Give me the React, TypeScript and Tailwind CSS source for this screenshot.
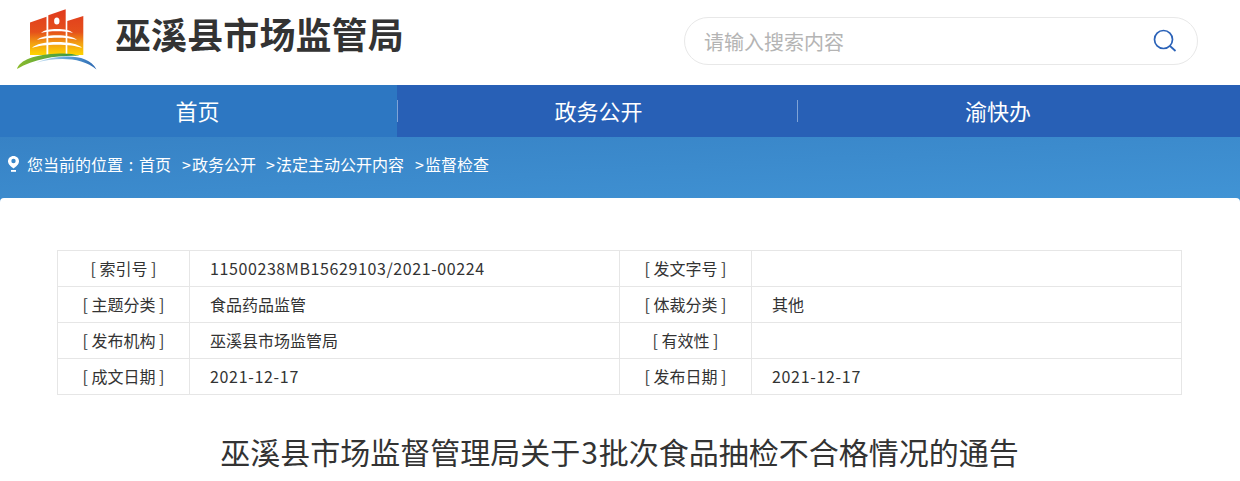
const font = { fontFamily: '"Noto Sans CJK SC", "Noto Sans", sans-serif' };

function Logo() {
  return (
    <svg width="110" height="80" viewBox="0 0 110 80" className="block shrink-0">
      <defs>
        <linearGradient id="flag" x1="0" y1="9" x2="0" y2="55" gradientUnits="userSpaceOnUse">
          <stop offset="0" stopColor="#e03a1e" />
          <stop offset="0.5" stopColor="#e5501b" />
          <stop offset="0.75" stopColor="#f3a012" />
          <stop offset="1" stopColor="#fed500" />
        </linearGradient>
        <linearGradient id="green" x1="17" y1="0" x2="70" y2="0" gradientUnits="userSpaceOnUse">
          <stop offset="0" stopColor="#8cbb2c" />
          <stop offset="1" stopColor="#3d9a46" />
        </linearGradient>
        <linearGradient id="blue" x1="36" y1="0" x2="97" y2="0" gradientUnits="userSpaceOnUse">
          <stop offset="0" stopColor="#d6e8f4" />
          <stop offset="0.5" stopColor="#5da3d8" />
          <stop offset="1" stopColor="#2a66b0" />
        </linearGradient>
      </defs>
      <path d="M30 22.500L46.500 16.700V55H30Z" fill="url(#flag)" />
      <path d="M48.300 15.300L65.700 9.300V55H48.300Z" fill="url(#flag)" />
      <path d="M67.300 21L83.300 16V55H67.300Z" fill="url(#flag)" />
      <ellipse cx="56.800" cy="21" rx="2.700" ry="3.500" fill="#fff" />
      <path d="M47.400 33V55M66.500 33V55" stroke="#fff" strokeWidth="1.100" strokeOpacity="0.85" />
      <path d="M41 33C45 27.500 69 27.500 73 33C66 30.500 48 30.500 41 33Z" fill="#fff" />
      <path d="M37 40C42 33.500 72 33.500 77 40C68 37 46 37 37 40Z" fill="#fff" />
      <path d="M32 48C38 40 76 40 82 48C72 43.500 42 43.500 32 48Z" fill="#fff" />
      <path d="M17 69C20 60 34 54.500 60 53.500C68 53.300 74 54 80 56C60 55 36 58 17 69Z" fill="url(#green)" />
      <path d="M36 63C55 57 82 56.500 96.500 69.500C92 60 80 56.500 68 56.500C56 56.500 44 59 36 63Z" fill="url(#blue)" />
    </svg>
  );
}

const rows = [
  ["[ 索引号 ]", "11500238MB15629103/2021-00224", "[ 发文字号 ]", ""],
  ["[ 主题分类 ]", "食品药品监管", "[ 体裁分类 ]", "其他"],
  ["[ 发布机构 ]", "巫溪县市场监管局", "[ 有效性 ]", ""],
  ["[ 成文日期 ]", "2021-12-17", "[ 发布日期 ]", "2021-12-17"],
];

function Value({ text }: { text: string }) {
  if (text.length > 20) return <span className="tracking-[0.6px]">{text}</span>;
  if (/^[0-9-]+$/.test(text)) return <span className="tracking-[0.68px]">{text}</span>;
  return <span>{text}</span>;
}

export default function App() {
  return (
    <div className="w-[1240px] h-[481px] overflow-hidden bg-white" style={font}>
      <header className="h-[85px] flex">
        <div className="w-[684px] flex items-start">
          <Logo />
          <h1 className="mt-[9px] ml-[5px] text-[36px] leading-[48px] font-bold text-[#333333] whitespace-nowrap tracking-[0.1px]">巫溪县市场监管局</h1>
        </div>
        <div className="mt-[17px] w-[514px] h-[48px] rounded-[24px] border border-[#e8e8e8] flex items-center pl-[19px] pr-5 justify-between">
          <span className="text-[20px] leading-[28px] mt-[2px] text-[#b4b4b4]">请输入搜索内容</span>
          <svg width="24" height="24" viewBox="0 0 24 24" fill="none" stroke="#2a62b8" strokeWidth="1.700">
            <circle cx="10.500" cy="10.500" r="9" />
            <path d="M17 17L22.500 22" />
          </svg>
        </div>
      </header>
      <nav className="h-[52px] flex bg-[#2860b6] text-white text-[22px] leading-[30px]">
        <div className="w-[397px] bg-[#2d77c2] flex items-center justify-center pb-[3px] pr-[2px]">首页</div>
        <div className="w-[401px] flex items-center justify-center relative pb-[3px] pl-[2px]">
          政务公开
          <span className="absolute right-0 top-[15px] h-[22px] w-px bg-[#7fa3d6]" />
          <span className="absolute left-0 top-[15px] h-[22px] w-px bg-[#7fa3d6]" />
        </div>
        <div className="w-[402px] flex items-center justify-center pb-[3px] pr-[2px]">渝快办</div>
      </nav>
      <div className="h-[65px] bg-gradient-to-br from-[#3782c5] to-[#4194d5] flex items-start pl-[7px] pt-[16px] text-white text-[16px] leading-[22px] whitespace-nowrap">
        <svg width="13" height="18" viewBox="0 0 13 18" className="mt-[2px] mr-[7px]">
          <path d="M6.500 1C3.300 1 1 3.300 1 6.300C1 9.300 4 11.800 6.500 13.500C9 11.800 12 9.300 12 6.300C12 3.300 9.700 1 6.500 1Z" fill="#fff" />
          <circle cx="6.500" cy="6" r="2.200" fill="#3a88c9" />
          <rect x="4" y="15" width="5" height="1.800" fill="#fff" />
        </svg>
        <span>您当前的位置<span className="inline-block w-4 text-center">:</span>首页</span>
        <span className="ml-[11px]"><span className="inline-block w-[10px]">&gt;</span>政务公开</span>
        <span className="ml-[10px]"><span className="inline-block w-[10px]">&gt;</span>法定主动公开内容</span>
        <span className="ml-[11px]"><span className="inline-block w-[10px]">&gt;</span>监督检查</span>
      </div>
      <main className="bg-white rounded-t-[4px] -mt-1 pt-[52px] px-[57px] relative">
        <div className="w-[1125px] border-t border-l border-[#e6e6e6] text-[16px] text-[#333333]">
          {rows.map((r) => (
            <div key={r[0]} className="grid grid-cols-[132px_430px_132px_430px] h-9 leading-[35px]">
              <div className="border-r border-b border-[#e6e6e6] text-center">{r[0]}</div>
              <div className="border-r border-b border-[#e6e6e6] pl-5"><Value text={r[1]} /></div>
              <div className="border-r border-b border-[#e6e6e6] text-center">{r[2]}</div>
              <div className="border-r border-b border-[#e6e6e6] pl-5"><Value text={r[3]} /></div>
            </div>
          ))}
        </div>
        <h2 className="mt-[35px] w-[1125px] text-center text-[30px] leading-[42px] text-[#333333] font-normal whitespace-nowrap">巫溪县市场监督管理局关于<span className="px-[1px]">3</span>批次食品抽检不合格情况的通告</h2>
      </main>
    </div>
  );
}
